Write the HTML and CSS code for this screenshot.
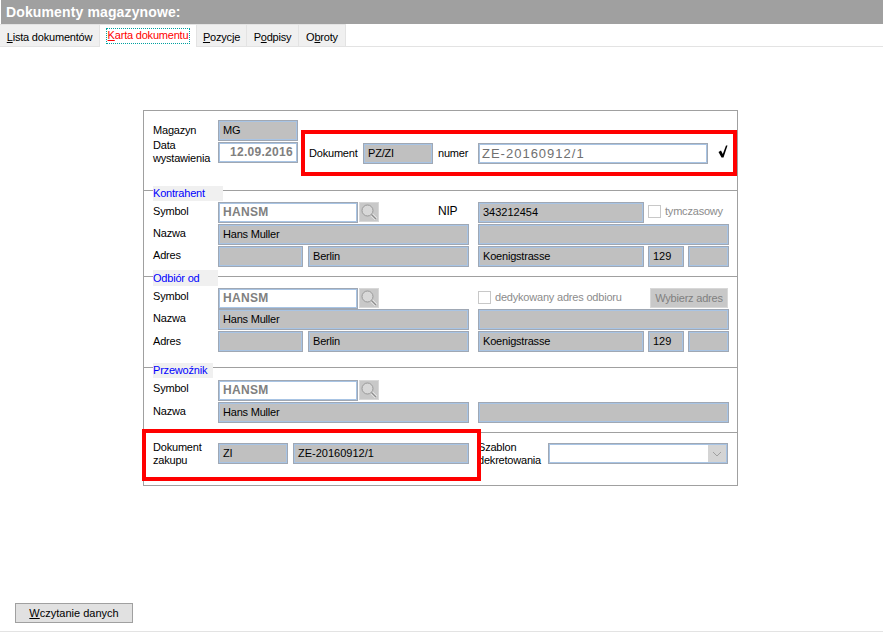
FILE: index.html
```html
<!DOCTYPE html>
<html lang="pl">
<head>
    <meta charset="UTF-8">
    <title>Dokumenty magazynowe</title>
    <link rel="stylesheet" href="styles.css">
</head>
<body>
    <div class="title">Dokumenty magazynowe:</div>
    <div class="tabs">
        <div class="tab w99"><u>L</u>ista dokumentów</div>
        <div class="tab active w96"><span><u>K</u>arta dokumentu</span></div>
        <div class="tab w50"><u>P</u>ozycje</div>
        <div class="tab w52">P<u>o</u>dpisy</div>
        <div class="tab w46">O<u>b</u>roty</div>
    </div>
    <div class="form">
        <div class="section first">
            <div class="left-col">
                <div class="row r22">
                    <div class="label low">Magazyn</div>
                    <div class="field w80">MG</div>
                </div>
                <div class="row r22">
                    <div class="label two">Data wystawienia</div>
                    <div class="field white bold date w80">12.09.2016</div>
                </div>
            </div>
            <div class="doc-row">
                <div class="doc-label">Dokument</div>
                <div class="field w70">PZ/ZI</div>
                <div class="num-label">numer</div>
                <div class="field white gray-text w230">ZE-20160912/1</div>
                <svg class="check" width="10" height="13" viewBox="0 0 10 13"><path d="M0.5 7 L3 5.5 L4.8 9 L8 0.5 L9.5 0.5 L5.5 12.5 L3.5 12.5 Z" fill="#000"/></svg>
            </div>
            <div class="red-one"></div>
        </div>
        <div class="section s2">
            <div class="legend l70">Kontrahent</div>
            <div class="row r22">
                <div class="label">Symbol</div>
                <div class="field white bold w140">HANSM</div>
                <div class="search"><svg width="18" height="18" viewBox="0 0 18 18"><path d="M11 11 L16 16" stroke="#f4f4f4" stroke-width="3"/><path d="M11 11 L16 16" stroke="#8c8c8c" stroke-width="1.5"/><circle cx="7.5" cy="7.5" r="5.5" fill="#d8d8d8" stroke="#9a9a9a"/></svg></div>
                <div class="nip">NIP</div>
                <div class="field num w166">343212454</div>
                <div class="check-box cb-tmp"></div>
                <div class="muted">tymczasowy</div>
            </div>
            <div class="row r22">
                <div class="label">Nazwa</div>
                <div class="field w251">Hans Muller</div>
                <div class="field w251 gap9"></div>
            </div>
            <div class="row r22">
                <div class="label">Adres</div>
                <div class="field w85"></div>
                <div class="field w161 gap5">Berlin</div>
                <div class="field w166 gap9">Koenigstrasse</div>
                <div class="field num w36 gap4">129</div>
                <div class="field w41 gap4"></div>
            </div>
        </div>
        <div class="section s3">
            <div class="legend l65">Odbiór od</div>
            <div class="row r21">
                <div class="label high">Symbol</div>
                <div class="field white bold w140">HANSM</div>
                <div class="search"><svg width="18" height="18" viewBox="0 0 18 18"><path d="M11 11 L16 16" stroke="#f4f4f4" stroke-width="3"/><path d="M11 11 L16 16" stroke="#8c8c8c" stroke-width="1.5"/><circle cx="7.5" cy="7.5" r="5.5" fill="#d8d8d8" stroke="#9a9a9a"/></svg></div>
                <div class="check-box cb-ded"></div>
                <div class="muted">dedykowany adres odbioru</div>
                <div class="pick">Wybierz adres</div>
            </div>
            <div class="row r22">
                <div class="label">Nazwa</div>
                <div class="field w251">Hans Muller</div>
                <div class="field w251 gap9"></div>
            </div>
            <div class="row r22">
                <div class="label low">Adres</div>
                <div class="field w85"></div>
                <div class="field w161 gap5">Berlin</div>
                <div class="field w166 gap9">Koenigstrasse</div>
                <div class="field num w36 gap4">129</div>
                <div class="field w41 gap4"></div>
            </div>
        </div>
        <div class="section s4">
            <div class="legend l60">Przewoźnik</div>
            <div class="row r22">
                <div class="label high">Symbol</div>
                <div class="field white bold w140">HANSM</div>
                <div class="search"><svg width="18" height="18" viewBox="0 0 18 18"><path d="M11 11 L16 16" stroke="#f4f4f4" stroke-width="3"/><path d="M11 11 L16 16" stroke="#8c8c8c" stroke-width="1.5"/><circle cx="7.5" cy="7.5" r="5.5" fill="#d8d8d8" stroke="#9a9a9a"/></svg></div>
            </div>
            <div class="row r22">
                <div class="label">Nazwa</div>
                <div class="field w251">Hans Muller</div>
                <div class="field w251 gap9"></div>
            </div>
        </div>
        <div class="section s5">
            <div class="row r22">
                <div class="label two">Dokument zakupu</div>
                <div class="field w70">ZI</div>
                <div class="field num w176 gap5">ZE-20160912/1</div>
                <div class="label two szablon">Szablon dekretowania</div>
                <div class="field white combo w180"><span class="arrow"><svg width="10" height="6" viewBox="0 0 10 6"><path d="M1 1 L5 5 L9 1" fill="none" stroke="#a0a0a0"/></svg></span></div>
            </div>
            <div class="red-two"></div>
        </div>
    </div>
    <div class="bottom">
        <div class="load"><u>W</u>czytanie danych</div>
    </div>
</body>
</html>
```

FILE: styles.css
```css
body {
    margin: 0;
    width: 883px;
    height: 633px;
    overflow: hidden;
    position: relative;
    background: #fff;
    font-family: "Liberation Sans", sans-serif;
    font-size: 11px;
    letter-spacing: -0.2px;
    color: #000;
}
.title {
    height: 24px;
    margin-left: 1px;
    padding-left: 5px;
    line-height: 24px;
    background: #a0a0a0;
    color: #fff;
    font-size: 14px;
    font-weight: bold;
    letter-spacing: 0.13px;
    box-sizing: border-box;
}
.tabs {
    display: flex;
    height: 23px;
    border-bottom: 1px solid #e3e3e3;
    box-sizing: border-box;
}
.tab {
    height: 22px;
    line-height: 24px;
    text-align: center;
    background: #f0f0f0;
    border-right: 1px solid #e3e3e3;
    border-top: 1px solid #e3e3e3;
    box-sizing: border-box;
}
.tab.active {
    height: 23px;
    background: #fff;
    color: #f00;
    line-height: 20px;
}
.tab.active span {
    display: inline-block;
    height: 14px;
    line-height: 13px;
    padding: 0 1px;
    outline: 1px dotted #00a0a0;
}
.w99 { width: 100px; }
.w96 { width: 97px; }
.w50 { width: 50px; }
.w52 { width: 52px; }
.w46 { width: 47px; }

.form {
    width: 595px;
    height: 376px;
    margin: 63px 0 0 143px;
    border: 1px solid #a0a0a0;
    box-sizing: border-box;
}
.section {
    position: relative;
    padding-left: 9px;
    box-sizing: border-box;
    border-top: 1px solid #a0a0a0;
}
.first {
    display: flex;
    height: 79px;
    padding-top: 9px;
    border-top: 0;
}
.left-col { width: 150px; }
.doc-row {
    display: flex;
    align-items: center;
    height: 22px;
    margin-top: 22px;
}
.doc-label { width: 60px; padding-left: 6px; box-sizing: border-box; }
.num-label { width: 45px; padding-left: 5px; box-sizing: border-box; }
.check { margin-left: 10px; margin-top: -3px; }
.s2 { height: 86px; padding-top: 11px; }
.s3 { height: 91px; padding-top: 11px; }
.s4 { height: 65px; padding-top: 12px; }
.s5 { height: 53px; padding-top: 10px; }

.row { display: flex; align-items: flex-start; }
.r21 { height: 21px; }
.r22 { height: 22px; }
.label { width: 65px; padding-top: 3px; line-height: 13px; box-sizing: border-box; }
.label.low { padding-top: 4px; }
.label.high { padding-top: 2px; }
.label.two { padding-top: 0; margin-top: -2px; }
.first .label.two { margin-top: -3px; }
.field {
    height: 21px;
    line-height: 19px;
    padding-left: 4px;
    background: #c0c0c0;
    border: 1px solid #a0a8b4;
    box-shadow: inset 0 0 0 1px #a8c4e4;
    box-sizing: border-box;
    white-space: nowrap;
    overflow: hidden;
}
.field.white { background: #fff; }
.num { letter-spacing: 0; }
.bold { font-weight: bold; color: #808080; letter-spacing: 0.3px; font-size: 12px; }
.gray-text { padding-left: 3px; color: #707070; font-size: 13px; letter-spacing: 1px; }
.date { text-align: right; padding-right: 4px; }
.w70 { width: 70px; }
.w80 { width: 80px; }
.w85 { width: 85px; }
.w140 { width: 140px; }
.w161 { width: 161px; }
.w166 { width: 166px; }
.w176 { width: 176px; }
.w180 { width: 180px; }
.w230 { width: 230px; }
.w251 { width: 251px; }
.w36 { width: 36px; }
.w41 { width: 41px; }
.gap4 { margin-left: 4px; }
.gap5 { margin-left: 5px; }
.gap9 { margin-left: 9px; }

.legend {
    position: absolute;
    left: 9px;
    top: -5px;
    height: 15px;
    line-height: 14px;
    background: #f0f0f0;
    color: #00f;
}
.l70 { width: 70px; }
.l65 { width: 65px; top: -7px; height: 16px; line-height: 16px; }
.l60 { width: 60px; }

.search {
    width: 20px;
    height: 20px;
    margin: 0 0 0 1px;
    background: #c8c8c8;
    border: 1px solid #d8d8d8;
    box-sizing: border-box;
}
.nip { width: 40px; margin-left: 59px; padding-top: 2px; font-size: 12px; }
.check-box {
    width: 13px;
    height: 13px;
    margin-top: 3px;
    background: #fff;
    border: 1px solid #c8c8c8;
    box-sizing: border-box;
}
.cb-tmp { margin-left: 4px; }
.cb-ded { margin-left: 99px; }
.muted { margin-left: 4px; padding-top: 3px; color: #8c8c8c; white-space: nowrap; }
.pick {
    width: 78px;
    height: 20px;
    margin: 0 9px 0 auto;
    line-height: 18px;
    text-align: center;
    color: #808080;
    background: #c8c8c8;
    border: 1px solid #d8d8d8;
    box-sizing: border-box;
}
.szablon { width: 70px; margin-left: 9px; }
.combo { position: relative; }
.arrow {
    position: absolute;
    right: 1px;
    top: 1px;
    width: 18px;
    height: 17px;
    background: #d4d4d4;
    text-align: center;
}
.arrow svg { margin-top: 6px; vertical-align: top; }

.red-one {
    position: absolute;
    left: 157px;
    top: 19px;
    width: 436px;
    height: 46px;
    border: 4px solid #f00;
    box-sizing: border-box;
}
.red-two {
    position: absolute;
    left: -2px;
    top: -4px;
    width: 339px;
    height: 52px;
    border: 4px solid #f00;
    box-sizing: border-box;
}

.bottom {
    margin-top: 117px;
    height: 29px;
    padding-left: 15px;
    border-bottom: 1px solid #e3e3e3;
    box-sizing: border-box;
}
.load {
    width: 118px;
    height: 20px;
    line-height: 18px;
    text-align: center;
    letter-spacing: 0;
    background: #e1e1e1;
    border: 1px solid #a0a0a0;
    box-sizing: border-box;
}
```
